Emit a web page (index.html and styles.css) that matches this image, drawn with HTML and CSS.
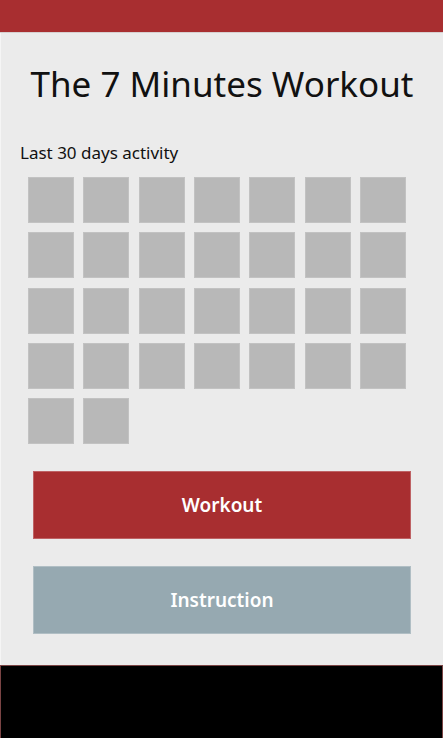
FILE: index.html
```html
<!DOCTYPE html>
<html lang="en">
<head>
    <meta charset="UTF-8">
    <meta name="viewport" content="width=device-width, initial-scale=1.0">
    <title>The 7 Minutes Workout</title>
    <link rel="stylesheet" href="styles.css">
</head>
<body>
    <div class="topbar"></div>
    <div class="page">
        <h1 class="title">The 7 Minutes Workout</h1>
        <p class="label">Last 30 days activity</p>
        <div class="days">
            <div class="day"></div><div class="day"></div><div class="day"></div><div class="day"></div><div class="day"></div><div class="day"></div><div class="day"></div>
            <div class="day"></div><div class="day"></div><div class="day"></div><div class="day"></div><div class="day"></div><div class="day"></div><div class="day"></div>
            <div class="day"></div><div class="day"></div><div class="day"></div><div class="day"></div><div class="day"></div><div class="day"></div><div class="day"></div>
            <div class="day"></div><div class="day"></div><div class="day"></div><div class="day"></div><div class="day"></div><div class="day"></div><div class="day"></div>
            <div class="day"></div><div class="day"></div>
        </div>
        <div class="actions">
            <button class="btn btn-workout" type="button">Workout</button>
            <button class="btn btn-instruction" type="button">Instruction</button>
        </div>
    </div>
    <div class="appbar"></div>
</body>
</html>
```

FILE: styles.css
```css
html, body {
    height: 100%;
}
body {
    margin: 0;
    font-family: 'Noto Sans', 'Open Sans', sans-serif;
    background-color: #ebebeb;
    display: flex;
    flex-direction: column;
}
.topbar {
    height: 32px;
    background-color: #a82e30;
    border-bottom: 1px solid #d6d0d0;
    flex: none;
}
.page {
    flex: 1;
    border-left: 1px solid #f5f5f5;
}
.title {
    margin: 27px 0 0;
    font-size: 35px;
    font-weight: 400;
    line-height: 48px;
    text-align: center;
    color: #111;
}
.label {
    margin: 33px 0 0 19px;
    font-size: 17px;
    line-height: 24px;
    color: #111;
}
.days {
    display: grid;
    grid-template-columns: repeat(7, 46px);
    gap: 9.33px;
    margin: 12px 0 0 27px;
}
.day {
    height: 46px;
    background-color: #b8b8b8;
    border: 1px solid #c2c2c2;
    box-sizing: border-box;
}
.actions {
    display: flex;
    flex-direction: column;
    gap: 27px;
    margin: 27px 32px 0 32px;
}
.btn {
    display: block;
    width: 100%;
    height: 68px;
    border: 1px solid rgba(255,255,255,0.25);
    font-family: inherit;
    font-size: 19px;
    font-weight: 600;
    color: #fff;
    cursor: pointer;
}
.btn-workout {
    background-color: #a82e30;
}
.btn-instruction {
    background-color: #96a9b1;
}
.appbar {
    height: 72px;
    flex: none;
    background-color: #000;
    border: 1px solid #7a4444;
    border-bottom: none;
}
```
